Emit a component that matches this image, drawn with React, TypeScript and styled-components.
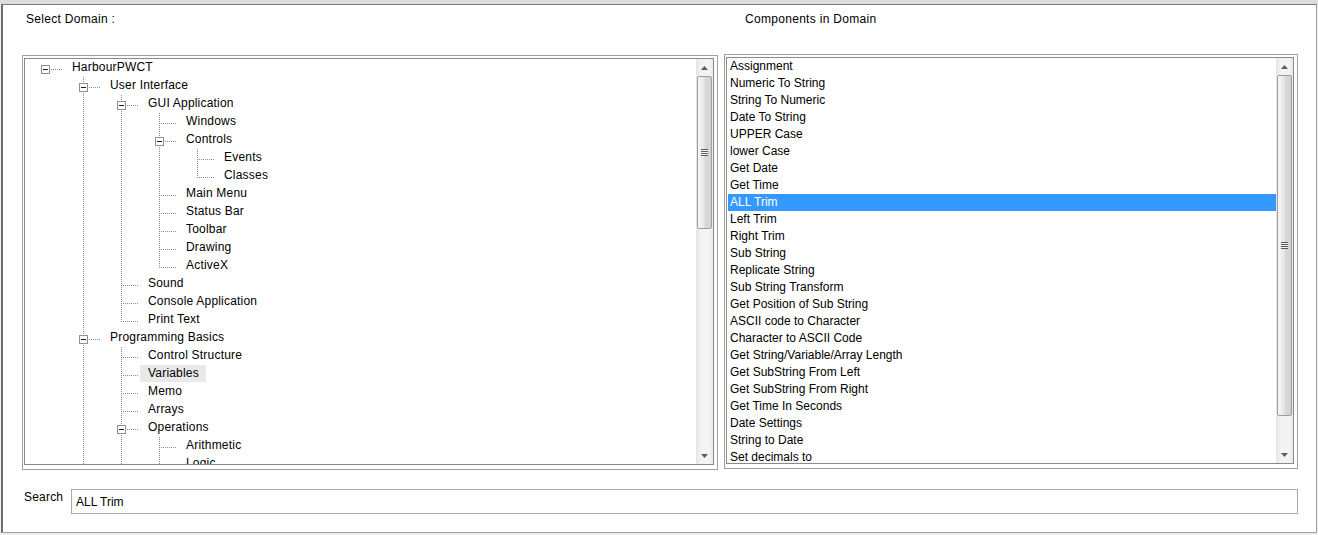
import React from "react";
import styled, { createGlobalStyle } from "styled-components";

const GlobalStyle = createGlobalStyle`
  html, body { margin: 0; padding: 0; }
  body {
    background: linear-gradient(#dcdcdc 0 4px, #f0f0f0 4px);
    font-family: "Liberation Sans", Arial, sans-serif;
    font-size: 12px;
    color: #000;
  }
  #root { height: 535px; padding-top: 4px; box-sizing: border-box; }
`;

const Frame = styled.div`
  box-sizing: border-box;
  width: 1316px;
  height: 529px;
  margin-left: 1px;
  background: #fff;
  border-top: 1px solid #7a7a7a;
  border-left: 2px solid #6e6e6e;
  border-right: 1px solid #a0a0a0;
  border-bottom: 1px solid #a0a0a0;
  padding: 7px 0 0 19px;
`;

const Columns = styled.div`
  display: grid;
  grid-template-columns: 696px 574px;
  column-gap: 6px;
  align-items: start;
`;

const Column = styled.div`
  display: flex;
  flex-direction: column;
`;

const Heading = styled.div<{ $indent: number }>`
  padding-left: ${(p) => p.$indent}px;
  height: 14px;
  line-height: 14px;
  letter-spacing: 0.3px;
  white-space: nowrap;
`;

const Panel = styled.div<{ $top: number }>`
  margin-top: ${(p) => p.$top}px;
  height: 415px;
  box-sizing: border-box;
  border: 1px solid #a0a0a0;
  padding: 2px 3px 4px 1px;
  background: #fff;
  display: flex;
`;

const PanelInner = styled.div`
  flex: 1;
  display: flex;
  border: 1px solid #8a8a8a;
  min-height: 0;
  overflow: hidden;
`;

const TreeBody = styled.div`
  flex: 1;
  padding-left: 1px;
  overflow: hidden;
  display: flex;
  flex-direction: column;
`;

const TreeRow = styled.div`
  display: flex;
  align-items: flex-start;
  height: 18px;
  flex: none;
`;

const Guide = styled.svg`
  display: block;
  flex: none;
`;

const NodeLabel = styled.span<{ $selected?: boolean }>`
  padding: 0 7px 0 8px;
  height: 17px;
  line-height: 17px;
  letter-spacing: 0.2px;
  white-space: nowrap;
  background: ${(p) => (p.$selected ? "#e9e9e9" : "transparent")};
`;

const ListBody = styled.div`
  flex: 1;
  padding-left: 1px;
  overflow: hidden;
  display: flex;
  flex-direction: column;
`;

const ListItem = styled.div<{ $selected?: boolean }>`
  height: 17px;
  line-height: 17px;
  padding-left: 2px;
  flex: none;
  white-space: nowrap;
  background: ${(p) => (p.$selected ? "#3399ff" : "transparent")};
  color: ${(p) => (p.$selected ? "#fff" : "#000")};
`;

const ScrollTrack = styled.div`
  width: 17px;
  flex: none;
  display: flex;
  flex-direction: column;
  background: linear-gradient(to right, #e4e4e4, #f2f2f2 25%, #f4f4f4 75%, #e8e8e8);
`;

const ScrollButton = styled.div`
  height: 17px;
  flex: none;
  display: flex;
  align-items: center;
  justify-content: center;
`;

const Thumb = styled.div<{ $size: number }>`
  height: ${(p) => p.$size}px;
  flex: none;
  margin: 0 1px;
  box-sizing: border-box;
  border: 1px solid #9d9d9d;
  border-radius: 2px;
  background: linear-gradient(to right, #f6f6f6, #e8e8e8 45%, #d9d9d9 55%, #d2d2d2);
  display: flex;
  align-items: center;
  justify-content: center;
`;

const Grip = styled.div`
  width: 7px;
  height: 7px;
  background: repeating-linear-gradient(to bottom, #5a5a5a 0 1px, #f4f4f4 1px 2px);
`;

const TrackSpace = styled.div`
  flex: 1;
`;

const SearchRow = styled.div`
  display: flex;
  align-items: flex-start;
  margin-top: 19px;
  width: 1276px;
`;

const SearchLabel = styled.label`
  width: 49px;
  flex: none;
  box-sizing: border-box;
  padding-left: 2px;
  margin-top: 1px;
  line-height: 14px;
  letter-spacing: 0.2px;
`;

const SearchInput = styled.input`
  flex: 1;
  height: 25px;
  box-sizing: border-box;
  border: 1px solid #a9a9a9;
  padding: 0 4px;
  margin: 0;
  font: 12px "Liberation Sans", Arial, sans-serif;
  color: #000;
  background: #fff;
  outline: none;
`;

type TNode = { label: string; selected?: boolean; children?: TNode[] };

const tree: TNode = {
  label: "HarbourPWCT",
  children: [
    {
      label: "User Interface",
      children: [
        {
          label: "GUI Application",
          children: [
            { label: "Windows" },
            { label: "Controls", children: [{ label: "Events" }, { label: "Classes" }] },
            { label: "Main Menu" },
            { label: "Status Bar" },
            { label: "Toolbar" },
            { label: "Drawing" },
            { label: "ActiveX" },
          ],
        },
        { label: "Sound" },
        { label: "Console Application" },
        { label: "Print Text" },
      ],
    },
    {
      label: "Programming Basics",
      children: [
        { label: "Control Structure" },
        { label: "Variables", selected: true },
        { label: "Memo" },
        { label: "Arrays" },
        {
          label: "Operations",
          children: [{ label: "Arithmetic" }, { label: "Logic" }, { label: "Strings" }],
        },
        { label: "Functions" },
      ],
    },
    { label: "Data Files" },
  ],
};

type FlatRow = {
  label: string;
  selected?: boolean;
  depth: number;
  expandable: boolean;
  hasNext: boolean;
  continues: boolean[];
};

function flatten(node: TNode, depth: number, hasNext: boolean, continues: boolean[], out: FlatRow[]) {
  out.push({
    label: node.label,
    selected: node.selected,
    depth,
    expandable: !!node.children?.length,
    hasNext,
    continues,
  });
  const kids = node.children ?? [];
  kids.forEach((k, i) => {
    flatten(k, depth + 1, i < kids.length - 1, [...continues, hasNext && depth > 0], out);
  });
  return out;
}

// only the rows that reach the tree's viewport are rendered
const VISIBLE_ROWS = 23;
const rows = flatten(tree, 0, false, [], []).slice(0, VISIBLE_ROWS);

const DOT = "#8a8a8a";
const MID = 10.5;

function Continuation({ on }: { on: boolean }) {
  return (
    <Guide width="38" height="18" shapeRendering="crispEdges">
      {on && <line x1="19.5" y1="0" x2="19.5" y2="18" stroke={DOT} strokeDasharray="1 1" />}
    </Guide>
  );
}

function Branch({ row }: { row: FlatRow }) {
  const top = row.depth > 0;
  const bottom = row.hasNext;
  return (
    <Guide width="38" height="18" shapeRendering="crispEdges">
      {top && bottom && <line x1="19.5" y1="0" x2="19.5" y2="18" stroke={DOT} strokeDasharray="1 1" />}
      {top && !bottom && <line x1="19.5" y1="0" x2="19.5" y2="11" stroke={DOT} strokeDasharray="1 1" />}
      <line x1={row.expandable ? 25 : 21} y1={MID} x2="37" y2={MID} stroke={DOT} strokeDasharray="1 1" />
      {row.expandable && (
        <>
          <rect x="15.5" y="6.5" width="8" height="8" fill="#fff" stroke="#8f8f8f" />
          <line x1="17" y1={MID} x2="22" y2={MID} stroke="#1a1a1a" />
        </>
      )}
    </Guide>
  );
}

function Arrow({ dir }: { dir: "up" | "down" }) {
  return (
    <svg width="7" height="4" viewBox="0 0 7 4">
      <polygon points={dir === "up" ? "0,4 3.5,0 7,4" : "0,0 3.5,4 7,0"} fill="#5c5c5c" />
    </svg>
  );
}

function Scrollbar({ thumb }: { thumb: number }) {
  return (
    <ScrollTrack>
      <ScrollButton>
        <Arrow dir="up" />
      </ScrollButton>
      <Thumb $size={thumb}>
        <Grip />
      </Thumb>
      <TrackSpace />
      <ScrollButton>
        <Arrow dir="down" />
      </ScrollButton>
    </ScrollTrack>
  );
}

const components = [
  "Assignment",
  "Numeric To String",
  "String To Numeric",
  "Date To String",
  "UPPER Case",
  "lower Case",
  "Get Date",
  "Get Time",
  "ALL Trim",
  "Left Trim",
  "Right Trim",
  "Sub String",
  "Replicate String",
  "Sub String Transform",
  "Get Position of Sub String",
  "ASCII code to Character",
  "Character to ASCII Code",
  "Get String/Variable/Array Length",
  "Get SubString From Left",
  "Get SubString From Right",
  "Get Time In Seconds",
  "Date Settings",
  "String to Date",
  "Set decimals to",
];

export default function App() {
  return (
    <>
      <GlobalStyle />
      <Frame>
        <Columns>
          <Column>
            <Heading $indent={4}>Select Domain :</Heading>
            <Panel $top={29}>
              <PanelInner>
                <TreeBody>
                  {rows.map((r, i) => (
                    <TreeRow key={i}>
                      {r.continues.map((c, k) => (
                        <Continuation key={k} on={c} />
                      ))}
                      <Branch row={r} />
                      <NodeLabel $selected={r.selected}>{r.label}</NodeLabel>
                    </TreeRow>
                  ))}
                </TreeBody>
                <Scrollbar thumb={153} />
              </PanelInner>
            </Panel>
          </Column>
          <Column>
            <Heading $indent={21}>Components in Domain</Heading>
            <Panel $top={28}>
              <PanelInner>
                <ListBody>
                  {components.map((c) => (
                    <ListItem key={c} $selected={c === "ALL Trim"}>
                      {c}
                    </ListItem>
                  ))}
                </ListBody>
                <Scrollbar thumb={341} />
              </PanelInner>
            </Panel>
          </Column>
        </Columns>
        <SearchRow>
          <SearchLabel htmlFor="search">Search</SearchLabel>
          <SearchInput id="search" defaultValue="ALL Trim" />
        </SearchRow>
      </Frame>
    </>
  );
}
